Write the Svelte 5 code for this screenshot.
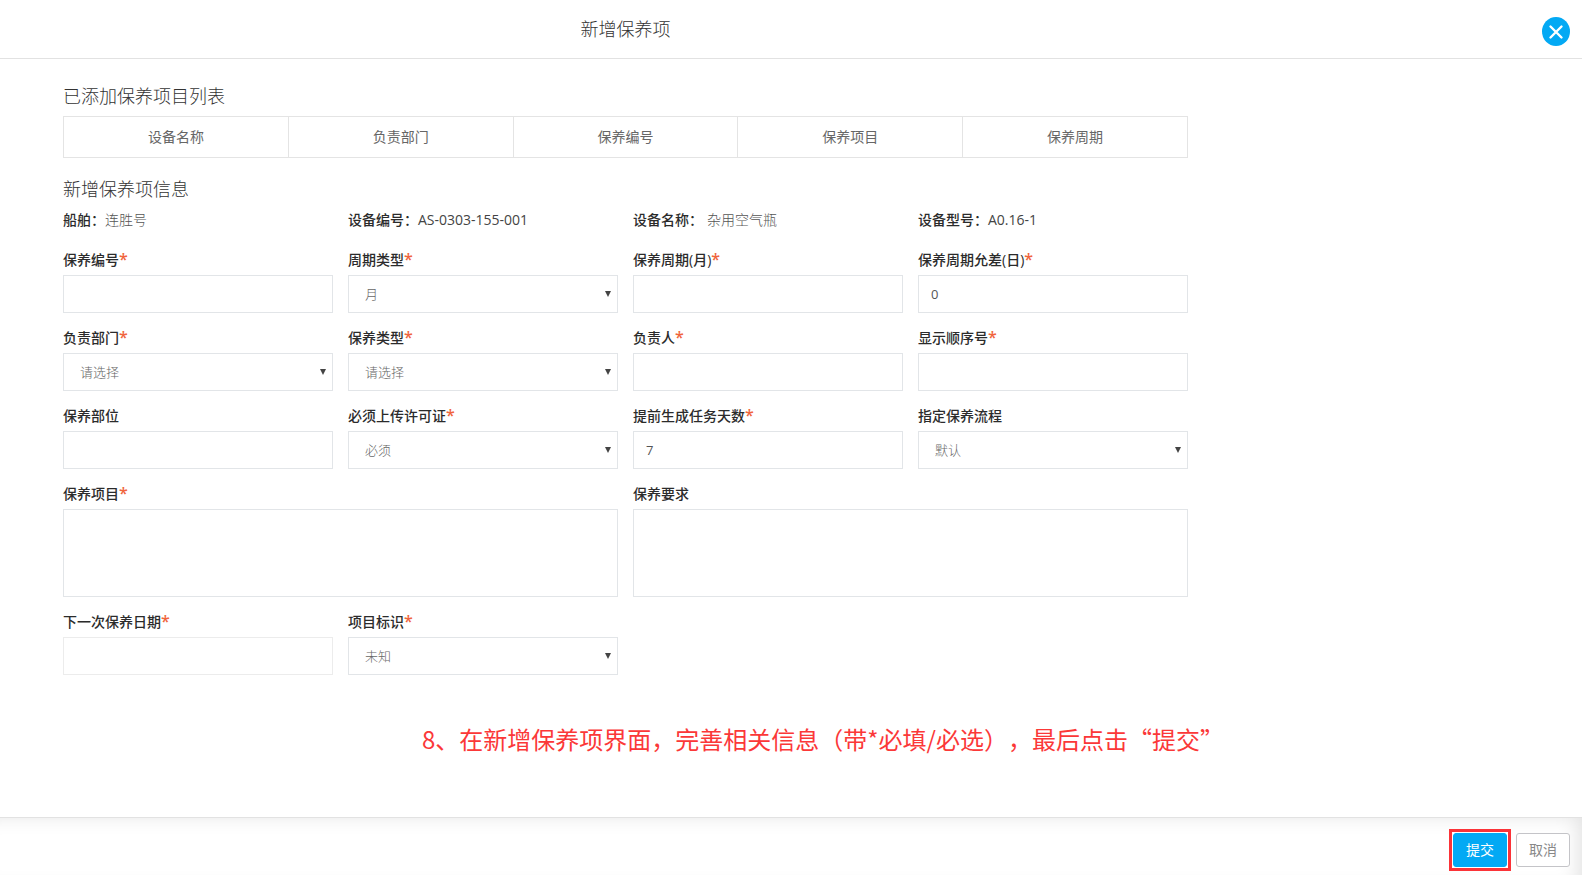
<script lang="ts">
  type Field = {
    id: string;
    label: string;
    kind: 'text' | 'select' | 'area' | 'date';
    value?: string;
    options?: string[];
    required?: boolean;
  };

  const COLUMNS = ['设备名称', '负责部门', '保养编号', '保养项目', '保养周期'];

  const INFO = [
    { label: '船舶：', value: '连胜号' },
    { label: '设备编号：', value: 'AS-0303-155-001', code: true },
    { label: '设备名称：', value: '杂用空气瓶', spaced: true },
    { label: '设备型号：', value: 'A0.16-1', code: true },
  ];

  let fields: Field[] = $state([
    { id: 'code', label: '保养编号', kind: 'text', value: '', required: true },
    { id: 'period-type', label: '周期类型', kind: 'select', value: '月', options: ['月', '小时'], required: true },
    { id: 'period', label: '保养周期(月)', kind: 'text', value: '', required: true },
    { id: 'tolerance', label: '保养周期允差(日)', kind: 'text', value: '0', required: true },
    { id: 'dept', label: '负责部门', kind: 'select', value: '请选择', options: ['请选择'], required: true },
    { id: 'type', label: '保养类型', kind: 'select', value: '请选择', options: ['请选择'], required: true },
    { id: 'owner', label: '负责人', kind: 'text', value: '', required: true },
    { id: 'order', label: '显示顺序号', kind: 'text', value: '', required: true },
    { id: 'part', label: '保养部位', kind: 'text', value: '' },
    { id: 'permit', label: '必须上传许可证', kind: 'select', value: '必须', options: ['必须', '非必须'], required: true },
    { id: 'advance', label: '提前生成任务天数', kind: 'text', value: '7', required: true },
    { id: 'process', label: '指定保养流程', kind: 'select', value: '默认', options: ['默认'] },
    { id: 'item', label: '保养项目', kind: 'area', value: '', required: true },
    { id: 'demand', label: '保养要求', kind: 'area', value: '' },
    { id: 'next-date', label: '下一次保养日期', kind: 'date', value: '', required: true },
    { id: 'mark', label: '项目标识', kind: 'select', value: '未知', options: ['未知'], required: true },
  ]);
</script>

<form class="dialog" onsubmit={(e) => e.preventDefault()}>
  <header>
    <h1>新增保养项</h1>
    <button type="button" class="close" aria-label="关闭">
      <svg viewBox="0 0 28 28"><path d="M8.5 8.5 19.5 19.5M19.5 8.5 8.5 19.5" /></svg>
    </button>
  </header>

  <main>
    <h2>已添加保养项目列表</h2>
    <table>
      <thead>
        <tr>
          {#each COLUMNS as name}<th scope="col">{name}</th>{/each}
        </tr>
      </thead>
    </table>

    <h2>新增保养项信息</h2>
    <div class="grid info">
      {#each INFO as row}
        <div>
          <b>{row.label}</b><span class:code={row.code} class:spaced={row.spaced}>{row.value}</span>
        </div>
      {/each}
    </div>

    <div class="grid">
      {#each fields as field (field.id)}
        <div class="field" class:wide={field.kind === 'area'}>
          <label for={field.id}>{field.label}{#if field.required}<i>*</i>{/if}</label>
          {#if field.kind === 'select'}
            <div class="select">
              <select id={field.id} bind:value={field.value}>
                {#each field.options ?? [] as option}<option>{option}</option>{/each}
              </select>
              <svg viewBox="0 0 6 6"><path d="M0 0H6L3 6Z" /></svg>
            </div>
          {:else if field.kind === 'area'}
            <textarea id={field.id} bind:value={field.value}></textarea>
          {:else}
            <input id={field.id} type="text" class:date={field.kind === 'date'} bind:value={field.value} />
          {/if}
        </div>
      {/each}
    </div>
  </main>

  <p class="hint">8、在新增保养项界面，完善相关信息（带*必填/必选），最后点击“提交”</p>

  <footer>
    <div class="marked"><button type="submit" class="btn primary">提交</button></div>
    <button type="button" class="btn">取消</button>
  </footer>
</form>

<style>
  :global(body) { margin: 0; background: #fff; }
  .dialog {
    display: flex;
    flex-direction: column;
    min-height: 100vh;
    font: 14px/20px "Open Sans", "Noto Sans CJK SC", sans-serif;
    color: #2b2b2b;
  }
  .dialog * { box-sizing: border-box; }

  header {
    display: flex;
    align-items: flex-start;
    padding: 17px 12px 12px 63px;
    border-bottom: 1px solid #e2e2e2;
  }
  h1, h2 { margin: 0; font-size: 18px; line-height: 24px; font-weight: 300; color: #333; }
  h1 { flex: 0 1 1125px; text-align: center; }
  .close {
    width: 28px;
    height: 29px;
    margin-left: auto;
    padding: 0;
    border: 0;
    border-radius: 50%;
    background: #03a9f4;
  }
  .close svg { display: block; width: 28px; fill: none; stroke: #fff; stroke-width: 2.4; stroke-linecap: round; }

  main { max-width: 1125px; margin: 25px 12px 0 63px; }
  h2 { margin-bottom: 8px; }
  table { width: 100%; margin-bottom: 19px; border-collapse: collapse; table-layout: fixed; }
  th { height: 41px; padding: 0; border: 1px solid #e4e4e4; font-weight: 400; color: #666; }

  .grid { display: grid; grid-template-columns: repeat(4, 1fr); gap: 15px; }
  .info { margin-bottom: 19px; line-height: 22px; }
  .info b { font-weight: 500; }
  .info span { font-weight: 300; color: #555; }
  .info .code { font-weight: 400; color: #444; }
  .info .spaced { margin-left: 4px; }

  .field { display: flex; flex-direction: column; gap: 5px; }
  .wide { grid-column: span 2; }
  label { height: 20px; font-weight: 500; }
  i { font-style: normal; font-size: 16px; line-height: 16px; font-weight: 600; color: #f0643c; }
  input, select, textarea {
    width: 100%;
    height: 38px;
    padding: 0 12px;
    border: 1px solid #e2e5e8;
    border-radius: 0;
    background: #fff;
    font: 13px/20px "Open Sans", "Noto Sans CJK SC", sans-serif;
    color: #555;
  }
  .date { border-color: #ececec; }
  textarea { display: block; height: 88px; padding: 8px 12px; resize: none; }
  .select { display: grid; align-items: center; }
  .select > * { grid-area: 1 / 1; }
  select { appearance: none; padding: 0 16px; font-weight: 300; color: #666; }
  .select svg { width: 6px; height: 6px; margin-right: 7px; justify-self: end; fill: #444; pointer-events: none; }

  .hint {
    margin: 48px 12px 24px;
    padding-left: 64px;
    text-align: center;
    font: 24px/32px "Noto Sans CJK SC", sans-serif;
    text-spacing-trim: space-all;
    color: #fb3838;
  }

  footer {
    display: flex;
    justify-content: flex-end;
    gap: 9px;
    margin-top: auto;
    padding: 15px 12px 8px;
    border-top: 1px solid #e2e2e2;
    box-shadow: inset -12px 6px 20px -8px #e2e2e2;
  }
  .marked { outline: 3px solid #fb3338; outline-offset: 1px; }
  .btn {
    display: block;
    width: 54px;
    height: 34px;
    padding: 0;
    border: 1px solid #c4c4c8;
    border-radius: 3px;
    background: #fff;
    font: 14px/20px "Open Sans", "Noto Sans CJK SC", sans-serif;
    color: #888;
  }
  .primary { border-color: #03a9f4; background: #03a9f4; color: #fff; }
</style>
